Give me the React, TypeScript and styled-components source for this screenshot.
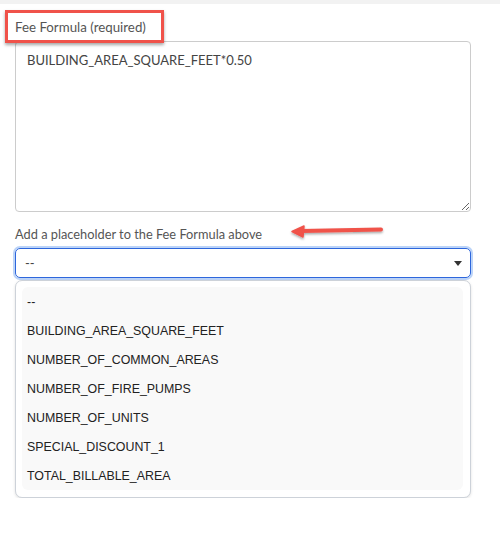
import React from "react";
import styled, { createGlobalStyle } from "styled-components";

const Global = createGlobalStyle`
  html, body { margin: 0; padding: 0; background: #ffffff; }
  body { font-family: Lato, "Open Sans", sans-serif; }
  * { box-sizing: border-box; }
`;

const TopStrip = styled.div`
  height: 4px;
  background: #f2f2f2;
`;

const Form = styled.div`
  padding: 0 29px 0 15px;
  display: flex;
  flex-direction: column;
`;

const LabelRow = styled.div`
  position: relative;
  z-index: 1;
  margin-top: 6px;
  margin-bottom: -2px;
  display: flex;
`;

const Highlight = styled.span`
  display: inline-flex;
  align-items: center;
  height: 33px;
  margin-left: -10px;
  padding: 0 15px 0 7px;
  border: 3px solid #f0524a;
  box-shadow: 0 2px 3px rgba(0, 0, 0, 0.35);
  font-size: 13.3px;
  color: #555555;
  background: transparent;
`;

const FormulaBox = styled.textarea`
  display: block;
  width: 100%;
  height: 171px;
  margin: 0;
  padding: 9px 11px;
  border: 1px solid #cccccc;
  border-radius: 4px;
  font-family: Lato, "Open Sans", sans-serif;
  font-size: 13px;
  line-height: 19px;
  color: #444444;
  resize: vertical;
  outline: none;
`;

const FieldLabel = styled.div`
  position: relative;
  margin-top: 14px;
  margin-bottom: 5px;
  font-size: 12.8px;
  line-height: 17px;
  color: #555555;
`;

const Pointer = styled.svg`
  position: absolute;
  left: 274px;
  top: -3px;
  overflow: visible;
`;

const SelectBox = styled.div`
  display: flex;
  align-items: center;
  justify-content: space-between;
  height: 30px;
  padding: 0 8px 0 9px;
  border: 1px solid #2d66dc;
  border-radius: 5px;
  box-shadow: 0 0 0 2px #bcd4f8;
  font-size: 13px;
  color: #444444;
`;

const Caret = styled.span`
  width: 0;
  height: 0;
  border-left: 4.5px solid transparent;
  border-right: 4.5px solid transparent;
  border-top: 5px solid #333333;
  margin-top: 1px;
`;

const Menu = styled.div`
  margin-top: 2px;
  padding: 6px 7px 7px 6px;
  border: 1px solid #cdd2d9;
  border-radius: 7px;
  box-shadow: 0 1px 3px rgba(0, 0, 0, 0.12);
  background: #ffffff;
`;

const OptionList = styled.ul`
  list-style: none;
  margin: 0;
  padding: 0;
  background: #f9f9f9;
  border-radius: 6px;
`;

const OptionItem = styled.li`
  height: 29px;
  display: flex;
  align-items: center;
  padding-left: 5px;
  font-family: "Liberation Sans", Arial, sans-serif;
  font-size: 12.4px;
  color: #222222;
`;

const options = [
  "--",
  "BUILDING_AREA_SQUARE_FEET",
  "NUMBER_OF_COMMON_AREAS",
  "NUMBER_OF_FIRE_PUMPS",
  "NUMBER_OF_UNITS",
  "SPECIAL_DISCOUNT_1",
  "TOTAL_BILLABLE_AREA",
];

export default function App() {
  return (
    <>
      <Global />
      <TopStrip />
      <Form>
        <LabelRow>
          <Highlight>Fee Formula (required)</Highlight>
        </LabelRow>
        <FormulaBox defaultValue="BUILDING_AREA_SQUARE_FEET*0.50" />
        <FieldLabel>
          Add a placeholder to the Fee Formula above
          <Pointer width="96" height="16" viewBox="0 0 96 16">
            <defs>
              <filter id="arrowShadow" x="-10%" y="-50%" width="120%" height="200%">
                <feDropShadow dx="0" dy="1.5" stdDeviation="1" floodColor="#000" floodOpacity="0.35" />
              </filter>
            </defs>
            <g filter="url(#arrowShadow)">
              <line x1="12" y1="8" x2="92" y2="6.5" stroke="#f0524a" strokeWidth="4" strokeLinecap="round" />
              <path d="M3 8.5 L15 3 L14 14 Z" fill="#f0524a" strokeLinejoin="round" stroke="#f0524a" strokeWidth="1.5" />
            </g>
          </Pointer>
        </FieldLabel>
        <SelectBox>
          <span>--</span>
          <Caret />
        </SelectBox>
        <Menu>
          <OptionList>
            {options.map((o) => (
              <OptionItem key={o}>{o}</OptionItem>
            ))}
          </OptionList>
        </Menu>
      </Form>
    </>
  );
}
